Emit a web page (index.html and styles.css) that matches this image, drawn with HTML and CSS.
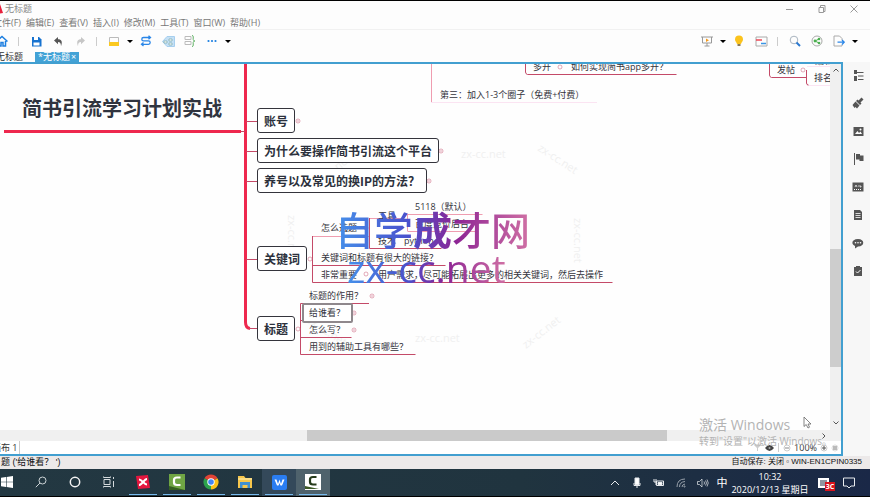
FILE: index.html
```
<!DOCTYPE html>
<html lang="zh-CN">
<head>
    <meta charset="utf-8">
    <title>无标题</title>
    <link rel="stylesheet" href="styles.css">
</head>
<body>
    <header class="titlebar">
        <svg class="app-logo" width="6" height="10" viewBox="0 0 6 10"><path d="M0 0h3l3 9-6 1z" fill="#e8203c"/><path d="M0 7l2-2" stroke="#fff"/></svg>
        <span class="window-title">无标题</span>
        <div class="window-buttons">
            <button aria-label="最小化"><svg width="8" height="8" viewBox="0 0 8 8"><path d="M0 4.500h7"/></svg></button>
            <button aria-label="还原"><svg width="8" height="8" viewBox="0 0 8 8"><path d="M1 2.500h4.500v5H1zM2.500 2V.5H7v6H5.500"/></svg></button>
            <button aria-label="关闭"><svg width="8" height="8" viewBox="0 0 8 8"><path d="M.5.500l7 7M7.500.5l-7 7"/></svg></button>
        </div>
    </header>

    <nav class="menu">
        <button>文件(F)</button>
        <button>编辑(E)</button>
        <button>查看(V)</button>
        <button>插入(I)</button>
        <button>修改(M)</button>
        <button>工具(T)</button>
        <button>窗口(W)</button>
        <button>帮助(H)</button>
    </nav>

    <div class="toolbar">
        <div class="tools tools-left">
            <button aria-label="主页"><svg width="12" height="12" viewBox="0 0 12 12" fill="none" stroke="#1d7fe0" stroke-width="1.500"><path d="M.5 6.500L6 1.500l5.500 5M2.500 6v5h2.500V7.500h2V11h2.500V6"/></svg></button>
            <i class="sep"></i>
            <button aria-label="保存"><svg width="11" height="11" viewBox="0 0 11 11"><path d="M1 1h7l2.500 2.500V10.500H1z" fill="#1773d0"/><path d="M3 1h4v3H3zM2.500 6.500h6v3h-6z" fill="#fff"/></svg></button>
            <button aria-label="撤销"><svg width="11" height="11" viewBox="0 0 11 11"><path d="M1 4.500L5 1v2.200c3.500 0 4.800 2.300 3 7C8 7.500 7.200 6 5 6v2.200z" fill="#555"/></svg></button>
            <button aria-label="重做"><svg width="11" height="11" viewBox="0 0 11 11"><path d="M10 4.500L6 1v2.200C2.500 3.200 1.200 5.500 3 10.200 3 7.500 3.800 6 6 6v2.200z" fill="#c6c6c6"/></svg></button>
            <i class="sep"></i>
            <button aria-label="主题"><svg width="12" height="11" viewBox="0 0 12 11"><path d="M1.500 6V1.500h9V6" fill="none" stroke="#bbb"/><path d="M1 6h10v4H1z" fill="#fbc920"/></svg></button>
            <button class="caret" aria-label="更多主题"></button>
            <button aria-label="联系"><svg width="12" height="12" viewBox="0 0 12 12" fill="none" stroke="#2a86e8" stroke-width="1.300"><path d="M10.500 2.500H3.500a1.700 1.700 0 000 3.400h5a1.700 1.700 0 010 3.400H1.500M8.500.8l2 1.700-2 1.700M3.500 7.600l-2 1.700 2 1.700"/></svg></button>
            <button aria-label="外框"><svg width="13" height="11" viewBox="0 0 13 11"><path d="M.5 5.500L5 .5h7.500v10H5z" fill="#c5e0f5" stroke="#a6cfee"/><path d="M2 5h3v2H2zM7 3h3v2H7zM7 7h3v2H7z" fill="#fff" stroke="#6a9fa0" stroke-width=".6"/></svg></button>
            <button aria-label="概要"><svg width="12" height="12" viewBox="0 0 12 12" fill="none"><path d="M1 1.500h6v3H1zM1 6.500h6v3H1z" stroke="#bbb"/><path d="M8 .5c2 0 1 2 1.200 4 .1 1 .8 1.500 1.800 1.500-1 0-1.700.5-1.800 1.500-.2 2 .8 4-1.200 4" stroke="#61b266"/></svg></button>
            <button aria-label="更多"><svg width="10" height="4" viewBox="0 0 10 4" fill="#1d7fe0"><circle cx="1.500" cy="2" r="1.100"/><circle cx="5" cy="2" r="1.100"/><circle cx="8.500" cy="2" r="1.100"/></svg></button>
            <button class="caret" aria-label="更多工具"></button>
        </div>
        <div class="tools">
            <button aria-label="演示"><svg width="12" height="11" viewBox="0 0 12 11" fill="none"><path d="M0 1h12M1.500 1v6h9V1M6 7v3M3.500 10h5" stroke="#999"/><path d="M5 2.500v3.500l3-1.700z" fill="#f39a1e"/></svg></button>
            <button class="caret" aria-label="演示选项"></button>
            <button aria-label="头脑风暴"><svg width="10" height="12" viewBox="0 0 10 12"><path d="M5 .5a4 4 0 014 4c0 2-1.500 2.500-2 4.500H3C2.500 7 1 6.500 1 4.500a4 4 0 014-4z" fill="#fbc31d"/><path d="M3.500 9h3v2h-3z" fill="#8d7b52"/></svg></button>
            <button aria-label="甘特图"><svg width="13" height="11" viewBox="0 0 13 11" fill="none"><path d="M1 1h11v9H1z" stroke="#aaa"/><path d="M1 4h6" stroke="#ee4756" stroke-width="1.500"/><path d="M6 7.500h5" stroke="#3b94e5" stroke-width="1.500"/></svg></button>
            <i class="sep"></i>
            <button aria-label="搜索"><svg width="12" height="12" viewBox="0 0 12 12" fill="none"><circle cx="5" cy="5" r="3.800" stroke="#a9b4bf"/><path d="M7.500 7.500L11 11" stroke="#2a78d0" stroke-width="2"/></svg></button>
            <button aria-label="分享"><svg width="12" height="12" viewBox="0 0 12 12"><circle cx="6" cy="6" r="5" fill="none" stroke="#aaa"/><path d="M8 4L4 6l4 2" fill="none" stroke="#4caf50"/><g fill="#4caf50"><circle cx="8" cy="4" r="1.300"/><circle cx="4" cy="6" r="1.400"/><circle cx="8" cy="8" r="1.300"/></g></svg></button>
            <button aria-label="导出"><svg width="12" height="12" viewBox="0 0 12 12" fill="none"><path d="M9 5V3.500L6.500 1H1v10h8V9.500" stroke="#aaa"/><path d="M4.500 7.200H11M9 5l2.200 2.200L9 9.500" stroke="#2a86e8" stroke-width="1.300"/></svg></button>
            <button class="caret" aria-label="导出选项"></button>
        </div>
    </div>

    <div class="tabs">
        <button class="tab">无标题</button>
        <button class="tab active">*无标题 <span>×</span></button>
    </div>

    <main class="workspace">
        <section class="editor">
            <div class="canvas">
                <svg class="lines" width="831" height="366" viewBox="0 64 831 366" fill="none">
                    <g class="faint">
                        <text x="461" y="158">zx-cc.net</text>
                        <text x="415" y="342">zx-cc.net</text>
                        <text transform="translate(537 150) rotate(33)">zx-cc.net</text>
                        <text transform="translate(526 349) rotate(-38)">zx-cc.net</text>
                        <text transform="translate(574 218) rotate(90)">zx-cc.net</text>
                        <text transform="translate(288 215) rotate(90)">zx-cc.net</text>
                        <text transform="translate(316 188) rotate(-38)">zx-cc.net</text>
                        <text transform="translate(306 322) rotate(33)">zx-cc.net</text>
                    </g>
                    <path class="trunk" d="M245.500 64V322Q245.500 328 250 328.500"/>
                    <path class="trunk" d="M4 131.500H241"/>
                    <path class="branch" d="M241 131.500h4M246 121.500h11M246 151.500h11M246 181.500h11M246 259.500h11M249 328.500h8"/>
                    <path class="soft" d="M431.500 64v38M312.500 236.500h57M369.500 218.500h33M407.500 214.500h75M407.500 231.500h69M407.500 214v17"/>
                    <path class="pale" d="M431 102.500h166M807 85.500h24M807 66.500h24"/>
                    <path class="branch" d="M525.500 64v8q0 2 2 2.500h149M769.500 64v11q0 2 2 2.500h35M806.500 70v13q0 2 2 2"/>
                    <path class="branch" d="M312.500 236v46.500h300M312.500 265.500h133M369.500 218v30.500h72"/>
                    <path class="branch" d="M369 303.500H300.500v51h115M300.500 320.500h4M300.500 337.500h51"/>
                    <g class="folds">
                        <circle cx="298" cy="121" r="2"/><circle cx="441" cy="151" r="2"/><circle cx="429" cy="181" r="2"/>
                        <circle cx="310" cy="259" r="2"/><circle cx="298" cy="329" r="2"/><circle cx="372" cy="296" r="2"/>
                        <circle cx="354" cy="313" r="2"/><circle cx="354" cy="330" r="2"/><circle cx="366" cy="274" r="2"/>
                        <circle cx="366" cy="228" r="2"/><circle cx="560" cy="67" r="2"/><circle cx="803" cy="70" r="2"/>
                        <path d="M297 121h2M440 151h2M428 181h2M371 296h2M353 313h2M353 330h2"/>
                    </g>
                </svg>

                <h1 class="node root">简书引流学习计划实战</h1>

                <div class="node main n-account">账号</div>
                <div class="node main n-why">为什么要操作简书引流这个平台</div>
                <div class="node main n-ip">养号以及常见的换IP的方法？</div>
                <div class="node main n-keyword">关键词</div>
                <div class="node main n-heading">标题</div>

                <div class="node n-multi">多开</div>
                <div class="node n-app">如何实现简书app多开？</div>
                <div class="node n-circle">第三：加入1-3个圈子（免费+付费）</div>
                <div class="node n-post">发帖</div>
                <div class="node n-draft">编辑</div>
                <div class="node n-rank">排名</div>

                <div class="node n-how">怎么选题</div>
                <div class="node n-tool">工具</div>
                <div class="node n-5118">5118（默认）</div>
                <div class="node n-baidu">百度竞价后台</div>
                <div class="node n-tech">技术</div>
                <div class="node n-python">python</div>
                <div class="node n-link">关键词和标题有很大的链接？</div>
                <div class="node n-important">非常重要</div>
                <div class="node n-demand">用户需求，尽可能拓展出更多的相关关键词，然后去操作</div>

                <div class="node n-effect">标题的作用？</div>
                <div class="node n-who selected">给谁看？</div>
                <div class="node n-write">怎么写？</div>
                <div class="node n-aids">用到的辅助工具有哪些？</div>

                <div class="brand brand-name">自学<b>成</b>才网</div>
                <div class="brand brand-site">zx-cc.net</div>
            </div>

            <div class="vscroll">
                <svg width="8" height="8" viewBox="0 0 8 8"><path d="M1.500 5.500L4 3l2.500 2.500"/></svg>
                <div class="thumb"></div>
                <svg width="8" height="8" viewBox="0 0 8 8"><path d="M1.500 2.500L4 5l2.500-2.500"/></svg>
            </div>

            <div class="hscroll">
                <div class="thumb"></div>
                <svg width="8" height="8" viewBox="0 0 8 8"><path d="M2.500 1.500L5 4 2.500 6.500"/></svg>
            </div>

            <div class="sheetbar">
                <button class="sheet">画布 1</button>
                <div class="zoom">
                    <button aria-label="筛选"><svg width="9" height="8" viewBox="0 0 9 8"><path d="M.5.500h8L5 4v3H4V4z" fill="#ccc"/></svg></button>
                    <button aria-label="显示"><svg width="9" height="8" viewBox="0 0 9 8"><path d="M0 4q4.500-6 9 0-4.500 6-9 0z" fill="#444"/><circle cx="4.500" cy="4" r="1" fill="#aaa"/></svg></button>
                    <i class="sep"></i>
                    <button aria-label="缩小"><svg width="8" height="8" viewBox="0 0 8 8" fill="none" stroke="#888"><circle cx="4" cy="4" r="3" stroke="#ccc"/><path d="M2 4h4"/></svg></button>
                    <span>100%</span>
                    <button aria-label="放大"><svg width="8" height="8" viewBox="0 0 8 8" fill="none" stroke="#555"><circle cx="4" cy="4" r="3" stroke="#ccc"/><path d="M2 4h4M4 2v4"/></svg></button>
                    <button aria-label="适应"><svg width="8" height="8" viewBox="0 0 8 8" fill="none" stroke="#777"><circle cx="4" cy="4" r="3" stroke="#ddd"/><path d="M2 3h4M2 5h4"/></svg></button>
                </div>
            </div>
        </section>

        <aside class="panel">
            <button aria-label="大纲"><svg width="11" height="11" viewBox="0 0 11 11"><path d="M1 0h3v4H1zM1 6h3v5H1z"/><path d="M4 2.500h6.500M5 6h5.500M5 9.500h5.500" stroke="#555"/></svg></button>
            <button aria-label="格式"><svg width="12" height="12" viewBox="0 0 12 12"><path d="M9.500.5L11.500 2.500 8.500 5.500 9.500 6.500 8 8 4 4 5.500 2.500 6.500 3.500zM3.500 4.500L7.500 8.500 5 11.500 3.500 10 2.500 11 .5 8z"/></svg></button>
            <button aria-label="图片"><svg width="11" height="11" viewBox="0 0 11 11"><path d="M.5 1h10v9H.5z"/><path d="M2 8l2.500-3 1.500 2 1.500-1.500L9 8z" fill="#fff"/><circle cx="7.500" cy="3.500" r="1" fill="#fff"/></svg></button>
            <button aria-label="标记"><svg width="11" height="12" viewBox="0 0 11 12"><path d="M1 0h1v12H1zM3 1h4v1.500h3.500V8H6.500V6.500H3z"/></svg></button>
            <button aria-label="标签"><svg width="12" height="10" viewBox="0 0 12 10"><path d="M.5.5h11v9H.5z"/><path d="M2 7.500h8" stroke="#fff" stroke-dasharray="1 1"/><path d="M3 5l1-2 1 2M6 4h1M8 3v2h1V4" stroke="#fff" stroke-width=".7" fill="none"/></svg></button>
            <button aria-label="备注"><svg width="10" height="12" viewBox="0 0 10 12"><path d="M1 1h6l2 2v8H1z"/><path d="M2.500 4.500h5M2.500 6.500h5M2.500 8.500h5" stroke="#fff" stroke-width=".8"/></svg></button>
            <button aria-label="评论"><svg width="12" height="11" viewBox="0 0 12 11"><path d="M6 1c7 0 7 7.500 0 7.500L3 10.500V8C-1.500 6 0 1 6 1z"/><g fill="#fff"><circle cx="3.500" cy="4.800" r=".8"/><circle cx="6" cy="4.800" r=".8"/><circle cx="8.500" cy="4.800" r=".8"/></g></svg></button>
            <button aria-label="任务"><svg width="10" height="12" viewBox="0 0 10 12"><path d="M1 2h2V1h4v1h2v9H1z"/><path d="M3 6.500l1.500 1.500L7.500 5" stroke="#fff" fill="none"/></svg></button>
        </aside>
    </main>

    <footer class="status">
        <span class="status-left">题 ('给谁看？ ')</span>
        <span class="status-right">自动保存: 关闭 ▫ WIN-EN1CPIN0335</span>
    </footer>

    <div class="taskbar">
        <div class="apps">
            <button aria-label="开始"><svg width="12" height="12" viewBox="0 0 12 12" fill="#fff"><path d="M0 1.700L5 1v4.700H0zM5.600.9L12 0v5.700H5.600zM0 6.300h5V11L0 10.300zM5.600 6.300H12V12l-6.400-.9z"/></svg></button>
            <button aria-label="搜索"><svg width="12" height="12" viewBox="0 0 12 12" fill="none" stroke="#ccd3d6"><circle cx="7.500" cy="4.500" r="3.500"/><path d="M5 7L.8 11.200"/></svg></button>
            <button aria-label="Cortana"><svg width="12" height="12" viewBox="0 0 12 12" fill="none" stroke="#f4f4f4" stroke-width="1.500"><circle cx="6" cy="6" r="4.700"/></svg></button>
            <button aria-label="任务视图"><svg width="12" height="12" viewBox="0 0 12 12" fill="none" stroke="#d5dadd"><path d="M1 3.500h6v5H1zM.5.500v1h7v-1M.5 11.500v-1h7v1M10.500 1v2M10.500 5v6"/></svg></button>
            <button class="running" aria-label="XMind"><svg width="16" height="16" viewBox="0 0 16 16"><path d="M1 2l12-1 2 13-12 1z" fill="#e3173f"/><path d="M4 5.500c3 0 5 5 8 5M12 5c-3 0-5 6-8 6" fill="none" stroke="#fff" stroke-width="2"/></svg></button>
            <button class="running" aria-label="Camtasia"><svg width="16" height="16" viewBox="0 0 16 16"><path d="M0 0h16v16H0z" fill="#6fa544"/><path d="M0 12l16 4H0z" fill="#345f20"/><path d="M11.500 3.500H8Q5 3.500 5 6v2.500Q5 11 8 11h3.500" fill="none" stroke="#fff" stroke-width="2.200"/></svg></button>
            <button class="running" aria-label="Chrome"><svg width="16" height="16" viewBox="0 0 16 16"><path d="M8 8L1.500 4.200A7.500 7.500 0 0114.500 4.200z" fill="#e24335"/><path d="M8 8l6.500-3.800A7.500 7.500 0 018 15.500z" fill="#fbc116"/><path d="M8 8v7.500A7.500 7.500 0 011.500 4.200z" fill="#2ba24c"/><circle cx="8" cy="8" r="3.700" fill="#fff"/><circle cx="8" cy="8" r="2.800" fill="#4285f4"/></svg></button>
            <button class="running" aria-label="文件资源管理器"><svg width="16" height="14" viewBox="0 0 16 14"><path d="M1 1h6l1.500 2H15v10H1z" fill="#f6c64b"/><path d="M1 3h14v2H1z" fill="#fbdc82"/><path d="M3 7h10v6h-2.500v-3h-5v3H3z" fill="#3f8fd0"/></svg></button>
            <button class="running lit" aria-label="WPS"><svg width="15" height="15" viewBox="0 0 15 15"><rect width="15" height="15" rx="2" fill="#2a7df2"/><path d="M2.500 4.500h2L6 9l1.500-4.500L9 9l1.500-4.500h2L10 10.500H8.500L7.500 8l-1 2.500H5z" fill="#fff"/></svg></button>
            <button class="running current" aria-label="录像机"><svg width="16" height="16" viewBox="0 0 16 16"><path d="M0 0h16v16H0z" fill="#fff"/><path d="M0 12l14 3H0z" fill="#3d5a26"/><path d="M11.500 3H8Q5 3 5 5.500V8q0 2.500 3 2.500h3.500" fill="none" stroke="#263b1b" stroke-width="2.200"/></svg></button>
        </div>
        <div class="tray">
            <button aria-label="显示隐藏的图标"><svg width="10" height="10" viewBox="0 0 10 10"><path d="M1 7l4-4 4 4"/></svg></button>
            <button aria-label="麦克风"><svg width="10" height="12" viewBox="0 0 10 12"><path d="M3 1h4v6.500H3z" fill="#fff"/><path d="M2 6v2.500h6V6M5 9v2"/></svg></button>
            <button aria-label="电池"><svg width="12" height="10" viewBox="0 0 12 10"><path d="M3.500 3h7v4.500h-7zM1 1v3M3 1v3M1 4h2v3"/><path d="M5 4.500h4V6.500H5z" fill="#fff"/></svg></button>
            <button aria-label="网络"><svg width="10" height="10" viewBox="0 0 10 10" opacity=".6"><path d="M1 9Q1 1 9 1M3.500 9q0-5 5.500-5.500M6 9q0-2.500 3-3"/><circle cx="8.500" cy="8.500" r=".6"/></svg></button>
            <button aria-label="音量"><svg width="12" height="10" viewBox="0 0 12 10"><path d="M.5 3.500h2L5 1v8L2.500 6.500h-2zM7 3.500q1 1.500 0 3M8.500 2.500q2 2.500 0 5M10 1.500q2.500 3.500 0 7" stroke-width=".7"/></svg></button>
            <button class="ime">中</button>
            <button class="clock"><span>10:32</span><span>2020/12/13 星期日</span></button>
            <button class="news" aria-label="通知"><svg width="12" height="12" viewBox="0 0 12 12"><path d="M0 1h11v10H0z" fill="#fff"/><path d="M2 4h7M2 6h7M2 8h5" stroke="#1c2b40"/></svg><b>3C</b></button>
            <button aria-label="操作中心"><svg width="12" height="12" viewBox="0 0 12 12"><path d="M.5 1h11v8H8L6 11 4 9H.5z"/></svg></button>
        </div>
    </div>

    <div class="activate">
        <p class="activate-title">激活 Windows</p>
        <p>转到"设置"以激活 Windows。</p>
    </div>
    <svg class="cursor" width="9" height="13" viewBox="0 0 9 13"><path d="M1 1v9.500l2.200-2L5 12l1.500-.8L5 8h3z" fill="#fff" stroke="#666" stroke-width=".8"/></svg>
</body>
</html>
```
FILE: styles.css
```
* {
    box-sizing: border-box;
}
body {
    position: relative;
    display: flex;
    flex-direction: column;
    height: 100vh;
    margin: 0;
    overflow: hidden;
    border-top: 1px solid #000;
    border-bottom: 1px solid #000;
    background: #fdfdfd;
    color: #333;
    font: 9px/12px "Open Sans", "Noto Sans CJK SC", sans-serif;
}
button {
    display: flex;
    align-items: center;
    justify-content: center;
    padding: 0;
    border: none;
    background: none;
    color: inherit;
    font: inherit;
    white-space: nowrap;
}
svg {
    flex: none;
}

/* window chrome */
.titlebar {
    display: flex;
    align-items: center;
    height: 15px;
    color: #888;
}
.app-logo {
    margin-left: -3px;
}
.window-title {
    padding-left: 2px;
}
.window-buttons {
    display: flex;
    margin-left: auto;
}
.window-buttons button {
    width: 32px;
}
.window-buttons svg {
    fill: none;
    stroke: #999;
}
.menu {
    display: flex;
    gap: 5px;
    height: 14px;
    margin-left: -7px;
    color: #777;
    border-bottom: 1px solid #f1f1f1;
}
.toolbar {
    display: flex;
    justify-content: space-between;
    height: 22px;
    padding-right: 10px;
}
.tools {
    display: flex;
    align-items: center;
}
.tools-left {
    margin-left: -9px;
}
.tools button {
    width: 22px;
    height: 22px;
}
.tools .caret {
    width: 10px;
}
.caret::after {
    content: "";
    border: 3px solid transparent;
    border-top-color: #000;
    border-bottom: none;
}
.sep {
    width: 1px;
    height: 9px;
    margin: 0 6px 0 5px;
    background: #ccc;
}
.tools:not(.tools-left) {
    gap: 0;
}
.tabs {
    display: flex;
    gap: 12px;
    height: 10px;
    margin-left: -4px;
}
.tab {
    line-height: 10px;
}
.tab.active {
    gap: 1px;
    padding: 0 3px;
    background: #42a2d6;
    color: #fff;
}

/* editor */
.workspace {
    display: flex;
    flex: 1;
    min-height: 0;
}
.editor {
    display: grid;
    flex: 1;
    grid-template-columns: 1fr 11px;
    grid-template-rows: 1fr 11px 13px;
    min-width: 0;
    border: solid #429fd0;
    border-width: 2px 2px 2px 0;
}
.canvas {
    position: relative;
    overflow: hidden;
    background: #fefefe;
}
.lines {
    position: absolute;
    left: 0;
    top: 0;
}
.trunk {
    stroke: #ee284e;
    stroke-width: 3;
}
.branch {
    stroke: #c44a68;
}
.soft {
    stroke: #ef9db0;
}
.pale {
    stroke: #fbe4f2;
}
.folds {
    stroke: #d0708a;
    stroke-width: .6;
}
.faint {
    fill: #f0f0f0;
    font-size: 11px;
}
.node {
    position: absolute;
    margin: 0;
    color: #34343c;
    white-space: nowrap;
}
.root {
    left: 22px;
    top: 30px;
    color: #30343f;
    font-size: 20px;
    font-weight: bold;
    line-height: 30px;
}
.main {
    left: 257px;
    padding: 0 6px;
    border: 1px solid #34343c;
    border-radius: 3px;
    background: #fff;
    color: #2c313c;
    font-family: "Noto Sans CJK SC", sans-serif;
    font-size: 12px;
    font-weight: bold;
    line-height: 23px;
}
.n-account { top: 44px; }
.n-why { top: 74px; }
.n-ip { top: 104px; }
.n-keyword { top: 182px; }
.n-heading { top: 252px; }
.n-multi { left: 533px; top: -3px; }
.n-app { left: 571px; top: -3px; }
.n-circle { left: 440px; top: 25px; }
.n-post { left: 777px; top: 0; }
.n-draft { left: 815px; top: -9px; }
.n-rank { left: 814px; top: 8px; }
.n-how { left: 321px; top: 158px; }
.n-tool { left: 378px; top: 146px; }
.n-5118 { left: 415px; top: 137px; }
.n-baidu { left: 415px; top: 154px; }
.n-tech { left: 378px; top: 171px; }
.n-python { left: 404px; top: 171px; }
.n-link { left: 321px; top: 188px; }
.n-important { left: 321px; top: 205px; }
.n-demand { left: 378px; top: 205px; }
.n-effect { left: 309px; top: 226px; }
.n-who { left: 302px; top: 239px; }
.n-write { left: 309px; top: 260px; }
.n-aids { left: 309px; top: 277px; }
.selected {
    padding: 2px 6px 2px 5px;
    border: 2px solid #8f888c;
    border-radius: 2px;
    background: #fff;
}
.brand {
    position: absolute;
    background: linear-gradient(90deg, #4590ea, #4a50cc 38%, #8d2494 62%, #d070a4);
    -webkit-background-clip: text;
    background-clip: text;
    color: transparent;
    font-family: "Noto Sans CJK SC", sans-serif;
    font-weight: 500;
    line-height: 48px;
    white-space: nowrap;
}
.brand-name {
    left: 335px;
    top: 140px;
    font-size: 39px;
}
.brand-site {
    left: 347px;
    top: 180px;
    font-family: "Open Sans", sans-serif;
    font-size: 39px;
}
.vscroll {
    display: flex;
    flex-direction: column;
    align-items: center;
    padding: 2px 0 3px;
    background: #f0f0f0;
}
.vscroll svg,
.hscroll svg {
    fill: none;
    stroke: #555;
}
.vscroll .thumb {
    width: 100%;
    height: 118px;
    margin: auto 0 52px;
    background: #cdcdcd;
}
.hscroll {
    display: flex;
    grid-column: 1 / -1;
    align-items: center;
    padding-right: 13px;
    background: #f0f0f0;
}
.hscroll .thumb {
    width: 360px;
    height: 100%;
    margin: 0 auto 0 307px;
    background: #cacaca;
}
.sheetbar {
    display: flex;
    grid-column: 1 / -1;
    justify-content: space-between;
    background: #fff;
}
.sheet {
    margin-left: -8px;
    padding-right: 2px;
    border-right: 1px solid #ccc;
}
.zoom {
    display: flex;
    align-items: center;
    gap: 3px;
    padding-right: 2px;
}
.zoom .sep {
    margin: 0 1px;
}
.panel {
    display: flex;
    flex-direction: column;
    gap: 6px;
    width: 27px;
    padding-top: 2px;
    background: #f7f7f7;
}
.panel button {
    width: 100%;
    height: 22px;
    padding-left: 3px;
}
.panel svg {
    fill: #555;
}

/* bottom bars */
.status {
    display: flex;
    justify-content: space-between;
    height: 13px;
    padding: 0 8px 0 1px;
    background: #ece9e9;
    color: #111;
    font-family: "Liberation Sans", "Noto Sans CJK SC", sans-serif;
    white-space: nowrap;
}
.status-right {
    font-size: 8px;
}
.taskbar {
    display: flex;
    justify-content: space-between;
    height: 27px;
    background: linear-gradient(90deg, #233842, #20343f 60%, #1a2847);
    color: #fff;
}
.apps {
    display: flex;
    margin-left: -10px;
}
.apps button {
    width: 34px;
    border-bottom: 1px solid transparent;
}
.apps .running {
    background: linear-gradient(#76b9ed, #76b9ed) center bottom / 28px 1px no-repeat;
}
.apps .lit {
    background-color: #34495a;
}
.apps .current {
    background-color: #4f626c;
}
.tray {
    display: flex;
    padding-right: 10px;
}
.tray button {
    width: 22px;
}
.tray svg {
    fill: none;
    stroke: #e8ebee;
}
.tray .ime {
    width: 16px;
    font-size: 11px;
}
.tray .clock {
    flex-direction: column;
    width: 80px;
    line-height: 13px;
}
.tray .news {
    position: relative;
    width: 28px;
}
.news svg {
    stroke: none;
}
.news b {
    position: absolute;
    right: 3px;
    bottom: 5px;
    width: 10px;
    background: #d8131c;
    font-size: 7px;
    line-height: 9px;
}

/* desktop overlay */
.activate {
    position: absolute;
    right: 38px;
    bottom: 48px;
    width: 133px;
    color: #b3b3b3;
    font-size: 10px;
    line-height: 14px;
    white-space: nowrap;
}
.activate p {
    margin: 0;
}
.activate .activate-title {
    font-size: 14px;
    line-height: 18px;
}
.cursor {
    position: absolute;
    right: 58px;
    bottom: 67px;
}
```
